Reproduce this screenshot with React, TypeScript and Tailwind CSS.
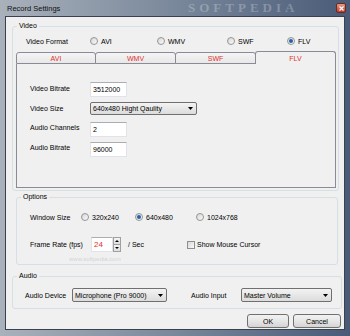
import React from "react";

const FONT = "font-['Liberation_Sans',Arial,sans-serif]";

function Radio({ label, checked, className }: { label: string; checked?: boolean; className?: string }) {
    return (
        <div className={`flex items-center gap-[3px] ${className ?? ""}`}>
            <span className="flex h-[8px] w-[8px] shrink-0 items-center justify-center rounded-full border border-[#959595] bg-gradient-to-br from-[#d6d6d6] to-[#fbfbfb]">
                {checked && <span className="h-[4px] w-[4px] rounded-full bg-[#2463ac]" />}
            </span>
            <span>{label}</span>
        </div>
    );
}

function GroupBox({
    title,
    className,
    children,
}: {
    title: string;
    className?: string;
    children?: React.ReactNode;
}) {
    return (
        <div className={`relative rounded-[3px] border border-[#d5dfe5] ${className ?? ""}`}>
            <span className="absolute -top-[6px] left-[4px] bg-[#f0f0f0] px-[2px] leading-[9px]">{title}</span>
            {children}
        </div>
    );
}

function TextBox({ value, className }: { value: string; className?: string }) {
    return (
        <div
            className={`flex h-[15px] items-center border border-[#e2e3ea] border-t-[#abadb3] bg-white pl-[2px] ${className ?? ""}`}
        >
            {value}
        </div>
    );
}

function Arrow() {
    return (
        <svg width="5" height="3" viewBox="0 0 5 3" className="shrink-0">
            <path d="M0 0h5L2.5 3z" fill="#000" />
        </svg>
    );
}

function Select({ value, className }: { value: string; className?: string }) {
    return (
        <div
            className={`flex items-center justify-between rounded-[2px] border border-[#707070] bg-gradient-to-b from-[#f3f3f3] to-[#dcdcdc] pl-[2px] pr-[3px] ${className ?? ""}`}
        >
            <span>{value}</span>
            <Arrow />
        </div>
    );
}

function Button({ label, className }: { label: string; className?: string }) {
    return (
        <div
            className={`flex h-[14px] items-center justify-center rounded-[3px] border border-[#707070] bg-gradient-to-b from-[#f2f2f2] via-[#e6e6e6] to-[#d4d4d4] ${className ?? ""}`}
        >
            {label}
        </div>
    );
}

const tabs = ["AVI", "WMV", "SWF", "FLV"];

export default function App() {
    return (
        <div
            className={`${FONT} relative flex h-[336px] w-[350px] flex-col overflow-hidden bg-gradient-to-r from-[#a9b1bb] via-[#7a889b] to-[#4a5b78] text-[7px] leading-[9px] text-black`}
        >
            {/* title bar */}
            <div className="relative flex h-[16px] shrink-0 items-center">
                <span className="pl-[7px] text-[7.5px] text-[#111]">Record Settings</span>
                <span className="absolute left-[188px] top-0 font-['Liberation_Serif',serif] text-[13px] font-bold leading-[16px] tracking-[4px] text-white/25">
                    SOFTPEDIA
                </span>
                <div className="ml-auto mr-[4px] flex h-[10px] w-[10px] items-center justify-center rounded-[2px] border border-[#6e2a20] bg-gradient-to-b from-[#e59a86] to-[#c23c26]">
                    <svg width="5" height="5" viewBox="0 0 5 5">
                        <path d="M0.5 0.5l4 4M4.5 0.5l-4 4" stroke="#fff" strokeWidth="1.2" />
                    </svg>
                </div>
            </div>

            {/* dialog body */}
            <div className="relative ml-[5px] flex h-[314px] w-[340px] flex-col border border-[#39414e] bg-[#f0f0f0]">
                {/* Video */}
                <GroupBox title="Video" className="ml-[6px] mt-[9px] h-[165px] w-[327px] shrink-0">
                    <div className="mt-[7px] flex h-[14px] items-center pl-[13px]">
                        <span className="w-[64px]">Video Format</span>
                        <Radio label="AVI" className="w-[67px]" />
                        <Radio label="WMV" className="w-[70px]" />
                        <Radio label="SWF" className="w-[60px]" />
                        <Radio label="FLV" checked />
                    </div>

                    <div className="ml-[3px] mt-[3px] flex h-[13px] items-end">
                        {tabs.map((t, i) =>
                            t === "FLV" ? (
                                <div
                                    key={t}
                                    className="-ml-px flex h-[13px] w-[81px] items-center justify-center rounded-t-[3px] border-x border-t border-[#898c95] bg-[#f0f0f0] text-[#e0302c]"
                                >
                                    {t}
                                </div>
                            ) : (
                                <div
                                    key={t}
                                    className={`flex h-[12px] items-center justify-center rounded-t-[3px] border border-[#898c95] bg-gradient-to-b from-[#f4f4f4] to-[#e8e8e8] text-[#e0302c] ${
                                        i === 0 ? "w-[80px]" : "-ml-px w-[81px]"
                                    }`}
                                >
                                    {t}
                                </div>
                            )
                        )}
                    </div>

                    <div className="ml-[3px] h-[124px] w-[320px] border-x border-b border-[#898c95] pl-[13px] pt-[18px]">
                        <div className="flex h-[20px] items-start">
                            <span className="mt-[2px] w-[60px]">Video Bitrate</span>
                            <TextBox value="3512000" className="w-[37px]" />
                        </div>
                        <div className="flex h-[20px] items-start">
                            <span className="mt-[2px] w-[60px]">Video Size</span>
                            <Select value="640x480 Hight Qaulity" className="h-[13px] w-[107px]" />
                        </div>
                        <div className="flex h-[20px] items-start">
                            <span className="mt-[1px] w-[60px]">Audio Channels</span>
                            <TextBox value="2" className="w-[37px]" />
                        </div>
                        <div className="flex h-[20px] items-start">
                            <span className="mt-[1px] w-[60px]">Audio Bitrate</span>
                            <TextBox value="96000" className="w-[37px]" />
                        </div>
                    </div>
                </GroupBox>

                {/* Options */}
                <GroupBox title="Options" className="ml-[10px] mt-[6px] h-[68px] w-[322px] shrink-0">
                    <div className="mt-[13px] flex h-[12px] items-center pl-[13px]">
                        <span className="w-[51px]">Window Size</span>
                        <Radio label="320x240" className="w-[54px]" />
                        <Radio label="640x480" checked className="w-[61px]" />
                        <Radio label="1024x768" />
                    </div>
                    <div className="mt-[14px] flex h-[15px] items-center pl-[13px]">
                        <span className="w-[61px]">Frame Rate (fps)</span>
                        <div className="flex h-[15px]">
                            <div className="flex w-[22px] items-center border border-[#e2e3ea] border-t-[#abadb3] bg-white pl-[2px] text-[8px] text-[#e0302c]">
                                24
                            </div>
                            <div className="flex w-[8px] flex-col">
                                <div className="flex h-1/2 items-center justify-center border border-[#a0a0a0] bg-gradient-to-b from-[#f4f4f4] to-[#dedede]">
                                    <svg width="4" height="2" viewBox="0 0 4 2">
                                        <path d="M0 2h4L2 0z" fill="#000" />
                                    </svg>
                                </div>
                                <div className="flex h-1/2 items-center justify-center border border-t-0 border-[#a0a0a0] bg-gradient-to-b from-[#f4f4f4] to-[#dedede]">
                                    <svg width="4" height="2" viewBox="0 0 4 2">
                                        <path d="M0 0h4L2 2z" fill="#000" />
                                    </svg>
                                </div>
                            </div>
                        </div>
                        <span className="ml-[7px] w-[59px]">/ Sec</span>
                        <div className="flex items-center gap-[2px]">
                            <span className="h-[8px] w-[8px] border border-[#8e8f8f] bg-gradient-to-br from-[#d8d8d8] to-[#fafafa]" />
                            <span>Show Mouse Cursor</span>
                        </div>
                    </div>
                    <span className="absolute left-[52px] top-[57px] text-[6px] text-[#d4d4d4]">www.softpedia.com</span>
                </GroupBox>

                {/* Audio */}
                <GroupBox title="Audio" className="ml-[6px] mt-[11px] h-[33px] w-[330px] shrink-0">
                    <div className="mt-[11px] flex h-[14px] items-center pl-[12px]">
                        <span className="w-[47px]">Audio Device</span>
                        <Select value="Microphone (Pro 9000)" className="h-[14px] w-[95px]" />
                        <span className="ml-[24px] w-[50px]">Audio Input</span>
                        <Select value="Master Volume" className="h-[14px] w-[91px]" />
                    </div>
                </GroupBox>

                <div className="mt-[5px] flex justify-end gap-[4px] pr-[3px]">
                    <Button label="OK" className="w-[42px]" />
                    <Button label="Cancel" className="w-[48px]" />
                </div>
            </div>
        </div>
    );
}
